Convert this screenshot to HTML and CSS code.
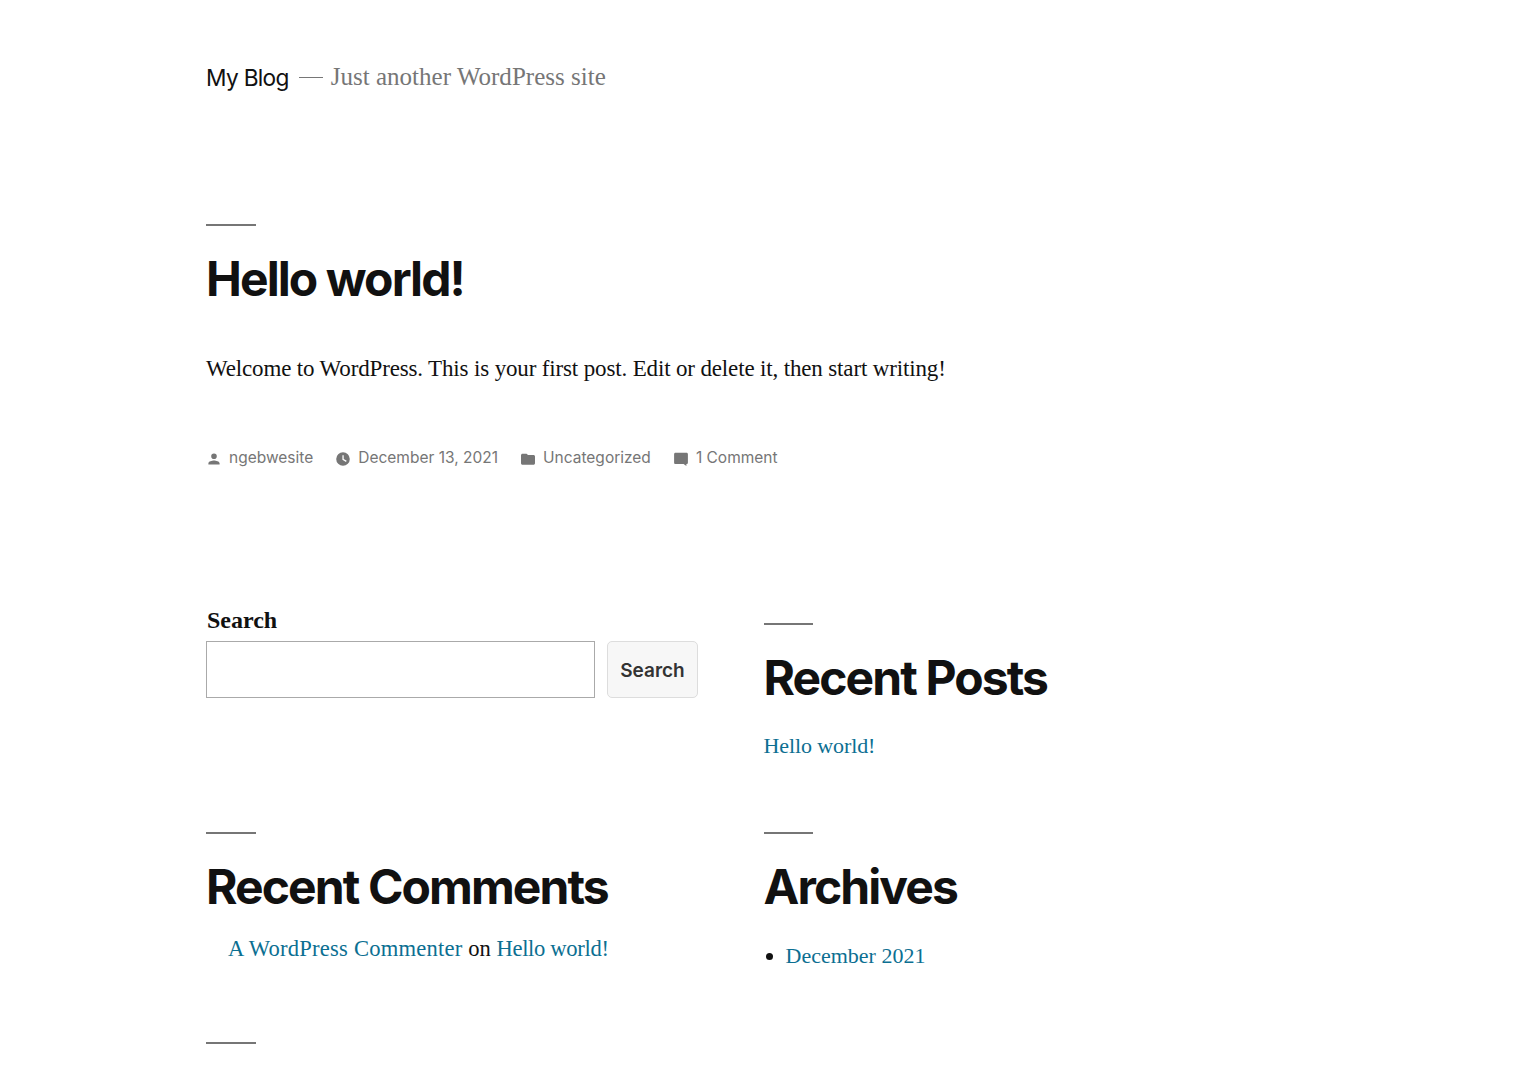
FILE: index.html
```html
<!DOCTYPE html>
<html lang="en">
<head>
<meta charset="utf-8">
<title>My Blog</title>
<link rel="stylesheet" href="styles.css">
</head>
<body>
<header class="site-header">
  <span class="site-title">My Blog</span>
  <span class="site-dash"></span>
  <span class="site-desc">Just another WordPress site</span>
</header>
<main class="post">
  <hr class="rule">
  <h1 class="post-title">Hello world!</h1>
  <p class="post-body">Welcome to WordPress. This is your first post. Edit or delete it, then start writing!</p>
  <div class="meta">
    <span class="meta-item"><svg class="meta-icon" viewBox="0 0 16 16"><path d="M8 8a2.800 2.800 0 1 0 0-5.600A2.800 2.800 0 0 0 8 8zm0 1.400c-1.900 0-5.600 1-5.600 2.800v1.400h11.200v-1.400c0-1.800-3.700-2.800-5.600-2.800z"/></svg>ngebwesite</span>
    <span class="meta-item"><svg class="meta-icon" viewBox="0 0 16 16"><path fill-rule="evenodd" d="M8 1.200a6.800 6.800 0 1 0 0 13.600A6.800 6.800 0 0 0 8 1.200zM8.700 4.300H7.400v4.500l3.600 2.100.7-1.100-3-1.800z"/></svg>December 13, 2021</span>
    <span class="meta-item"><svg class="meta-icon" viewBox="0 0 16 16"><path d="M6.600 2.700H2.500C1.700 2.700 1 3.400 1 4.200v8c0 .8.700 1.500 1.500 1.500h11c.8 0 1.500-.7 1.500-1.500V5.600c0-.8-.7-1.500-1.500-1.500H8z"/></svg>Uncategorized</span>
    <span class="meta-item"><svg class="meta-icon" viewBox="0 0 16 16"><path d="M2.500 1.800h11c.8 0 1.400.6 1.400 1.400v8.500c0 .8-.6 1.400-1.400 1.400h-.1v2l-2.800-2H2.500c-.8 0-1.400-.6-1.400-1.400V3.200c0-.8.600-1.400 1.400-1.400z"/></svg>1 Comment</span>
  </div>
</main>
<section class="widgets">
  <div class="widget widget-search">
    <label class="search-label" for="s">Search</label>
    <div class="search-row">
      <input id="s" class="search-input" type="text">
      <button class="search-btn" type="button">Search</button>
    </div>
  </div>
  <div class="widget">
    <hr class="rule">
    <h2 class="widget-title">Recent Posts</h2>
    <a class="link widget-link" href="#">Hello world!</a>
  </div>
  <div class="widget">
    <hr class="rule">
    <h2 class="widget-title">Recent Comments</h2>
    <p class="comment-line"><a class="link comment-author" href="#">A WordPress Commenter</a> on <a class="link comment-post" href="#">Hello world!</a></p>
  </div>
  <div class="widget">
    <hr class="rule">
    <h2 class="widget-title">Archives</h2>
    <ul class="archive-list"><li><a class="link" href="#">December 2021</a></li></ul>
  </div>
  <div class="widget widget-end">
    <hr class="rule">
  </div>
</section>
</body>
</html>
```
FILE: styles.css
```css
* { box-sizing: border-box; }
html, body { margin: 0; padding: 0; }
body { height: 1074px; overflow: hidden; background: #fff; color: #111; font-family: "Liberation Serif", serif; padding-left: 206px; }
.site-header { display: flex; align-items: center; height: 30px; margin-top: 62px; }
.site-title { font-family: Inter, sans-serif; font-size: 22.7px; letter-spacing: -0.7px; color: #111; }
.site-dash { width: 24px; height: 1px; background: #767676; margin: 0 8px 0 10px; }
.site-desc { font-size: 25px; letter-spacing: 0.02px; color: #767676; }
.rule { width: 49.5px; height: 2px; border: 0; margin: 0; background: #767676; }
.post { margin-top: 132px; }
.post-title { font-family: Inter, sans-serif; font-weight: 700; font-size: 48px; line-height: 54px; letter-spacing: -1.9px; margin: 26px 0 0; }
.post-body { font-size: 23px; line-height: 30px; letter-spacing: -0.15px; margin: 48px 0 0; }
.meta { display: flex; gap: 22px; margin-top: 64px; font-family: Inter, sans-serif; font-size: 15.5px; line-height: 20px; color: #767676; }
.meta-item { display: flex; align-items: center; gap: 7px; }
.meta-icon { width: 16px; height: 16px; fill: #767676; margin-top: 2px; }
.widgets { display: grid; grid-template-columns: 492px 492px; column-gap: 65.5px; margin-top: 154.9px; align-items: start; }
.widget { height: 209.5px; }
.widget-end { height: 2px; }
.widget-search { margin-top: -16px; }
.search-label { display: block; font-size: 24px; font-weight: 700; line-height: 26px; padding-left: 1px; }
.search-row { display: flex; gap: 12px; margin-top: 8px; }
.search-input { width: 389px; height: 57px; border: 1px solid #aaa; background: #fff; }
.search-btn { width: 91px; height: 57px; padding: 2px 0 0; border: 1px solid #ddd; border-radius: 5px; background: #f7f7f7; color: #333; font-family: Inter, sans-serif; font-size: 19px; font-weight: 600; }
.widget-title { font-family: Inter, sans-serif; font-weight: 700; font-size: 48px; line-height: 54px; letter-spacing: -1.9px; margin: 26px 0 0; }
.link { color: #0c6f92; text-decoration: none; }
.widget-link { display: block; font-size: 22px; letter-spacing: -0.1px; line-height: 30px; margin-top: 26px; }
.comment-line { font-size: 22.6px; line-height: 30px; margin: 20px 0 0; padding-left: 22px; }
.comment-author { letter-spacing: 0.22px; }
.comment-post { letter-spacing: -0.33px; }
.archive-list { font-size: 22px; line-height: 30px; margin: 27px 0 0; padding-left: 22px; }
```
